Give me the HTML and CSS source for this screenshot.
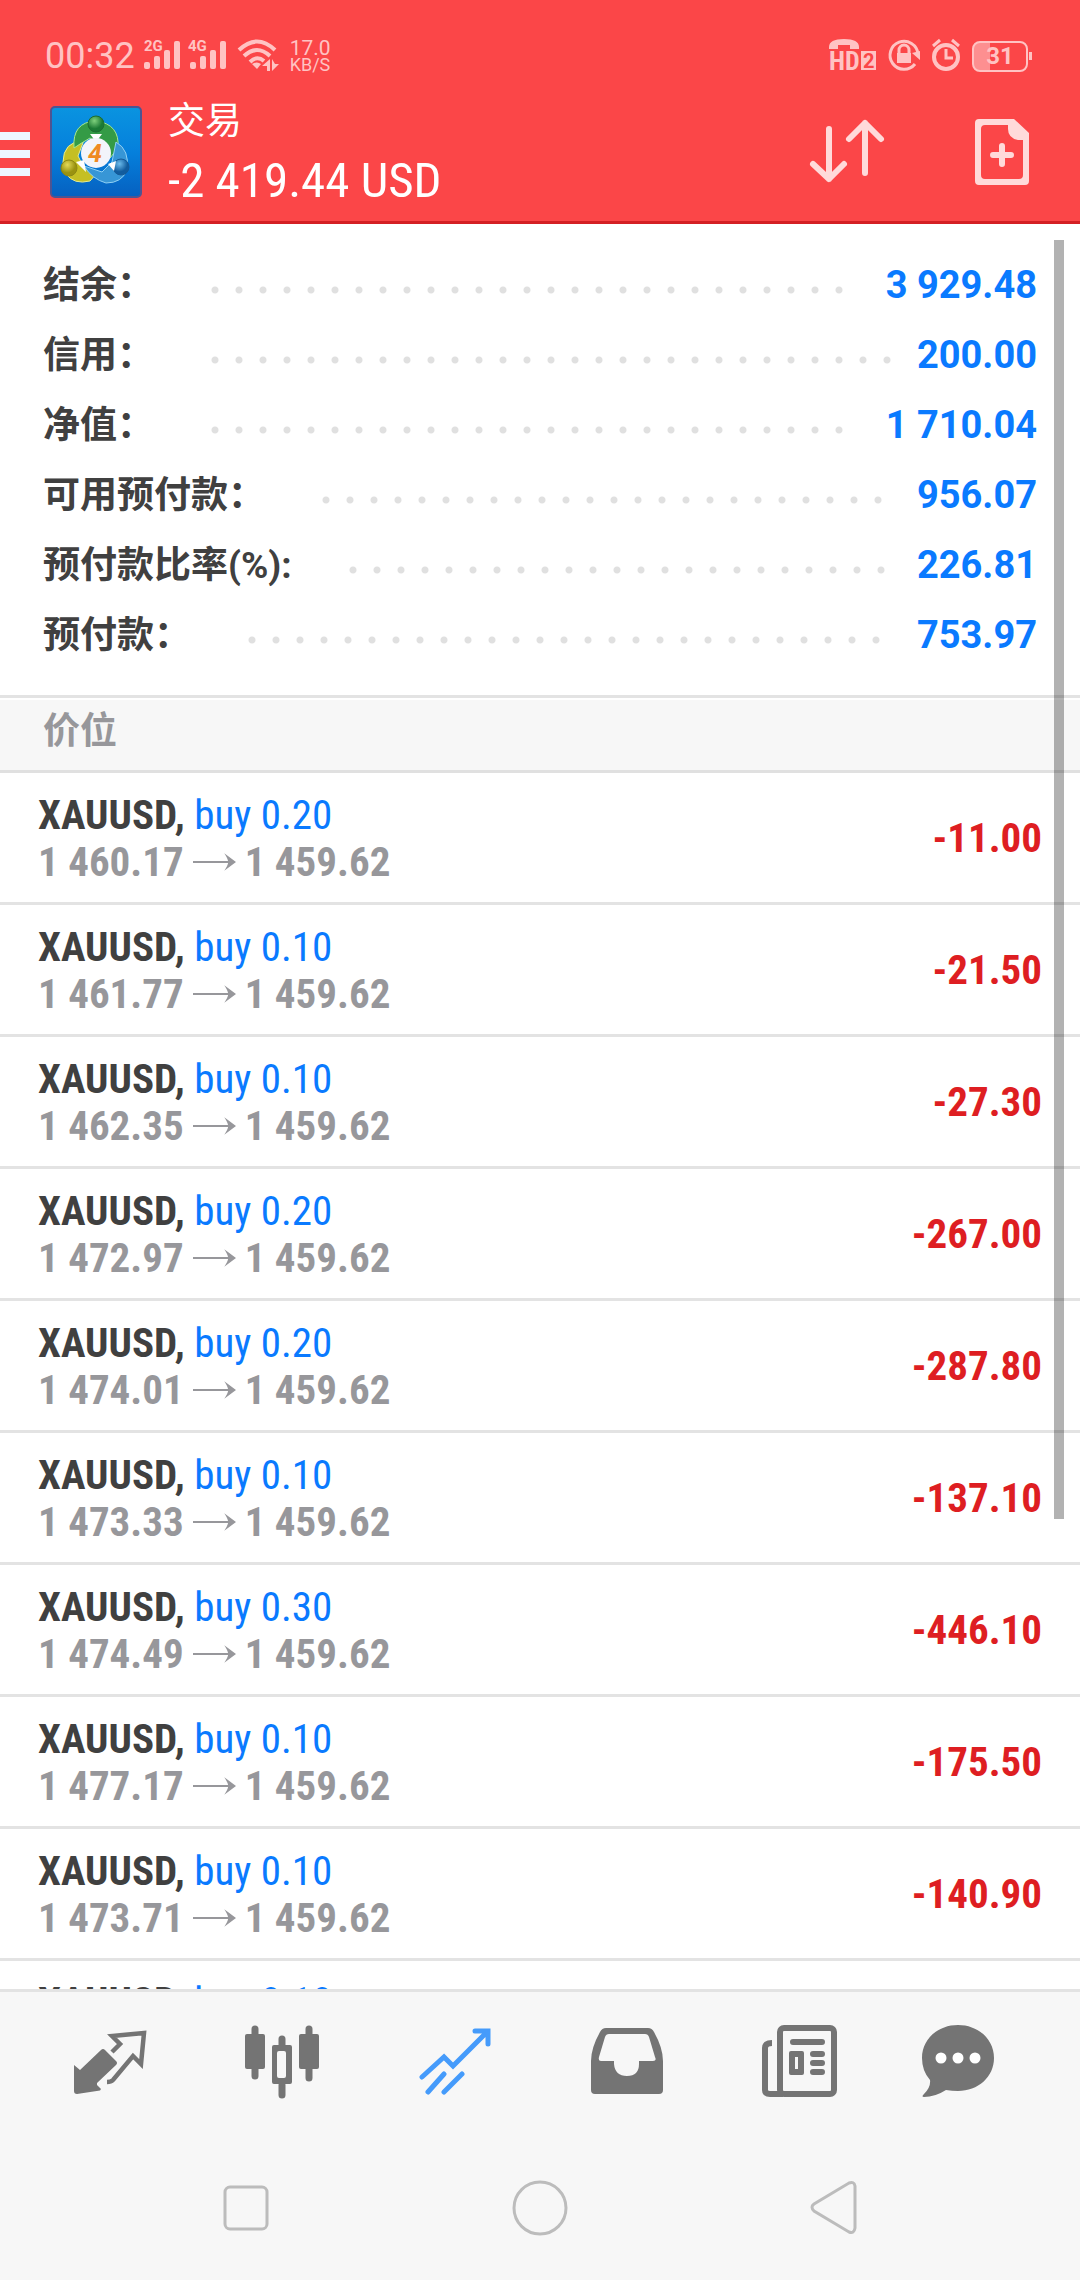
FILE: index.html
```html
<!DOCTYPE html>
<html lang="zh-CN">
<head>
<meta charset="utf-8">
<meta name="viewport" content="width=device-width, initial-scale=1">
<title>交易</title>
<link rel="stylesheet" href="styles.css">
</head>
<body>
<svg class="defs" width="0" height="0" aria-hidden="true">
  <symbol id="arrow" viewBox="0 0 44 20"><path d="M0 9h40v2H0z"/><path d="M32 1L44 10 32 19Q36 13 36 10T32 1z"/></symbol>
</svg>
<div class="app">
  <div class="top">
    <div class="status">
      <div class="status-group">
        <span class="clock">00:32</span>
        <svg width="84" height="36" viewBox="0 0 84 36" fill="currentColor" aria-hidden="true">
          <text class="net" x="0" y="13">2G</text>
          <rect x="0" y="24" width="6" height="7" rx="2"/><rect x="10" y="18" width="6" height="13" rx="2"/><rect x="20" y="12" width="6" height="19" rx="2"/><rect x="30" y="3" width="6" height="28" rx="2"/>
          <text class="net" x="44" y="13">4G</text>
          <rect x="46" y="24" width="6" height="7" rx="2"/><rect x="56" y="18" width="6" height="13" rx="2"/><rect x="66" y="12" width="6" height="19" rx="2"/><rect x="76" y="3" width="6" height="28" rx="2"/>
        </svg>
        <svg width="44" height="36" viewBox="0 0 44 36" fill="none" stroke="currentColor" stroke-width="4" aria-hidden="true">
          <path d="M2 12Q20-5 38 12M7 18Q20 6 33 18M13 24Q20 17 27 23"/>
          <path d="M15 26q5-3 9 0l-4 5z" fill="currentColor" stroke="none"/>
          <path d="M33 21v12h-3v-5h-5zM35 21v12l7-7h-4z" fill="currentColor" stroke="none"/>
        </svg>
        <span class="speed"><span class="speed-value">17.0</span><span class="speed-unit">KB/S</span></span>
      </div>
      <div class="status-group status-right">
        <svg width="47" height="36" viewBox="0 0 47 36" fill="currentColor" aria-hidden="true">
          <path d="M0 9Q0 1 15 1T30 9v2h-9V7H9v4H0z"/>
          <text class="hd" x="0" y="32">HD</text>
          <path d="M32 13h15v19H32z"/><text class="hd-index" x="34" y="30">2</text>
        </svg>
        <svg width="32" height="36" viewBox="0 0 32 36" fill="none" stroke="currentColor" stroke-width="3" aria-hidden="true">
          <path d="M27 26A14 14 0 1 1 30 16"/><path d="M11 16v-4a5 5 0 0 1 10 0v4"/>
          <path d="M9 15h14v10H9zM24 15l8-2v9z" fill="currentColor" stroke="none"/>
        </svg>
        <svg width="28" height="36" viewBox="0 0 28 36" fill="none" stroke="currentColor" stroke-width="4" aria-hidden="true">
          <circle cx="14" cy="19" r="12"/><path d="M14 11v9h7M1 8l7-6M27 8l-7-6" stroke-width="3"/>
        </svg>
        <span class="battery">31</span>
      </div>
    </div>
    <header class="header">
      <button class="menu" aria-label="菜单"><span class="bar"></span><span class="bar"></span><span class="bar"></span></button>
      <svg width="92" height="92" viewBox="0 0 92 92" role="img" aria-label="MetaTrader 4">
        <defs>
          <linearGradient id="bg" x2="0" y2="1"><stop offset="0" stop-color="#0a94e0"/><stop offset=".5" stop-color="#0580dc"/><stop offset="1" stop-color="#0660c0"/></linearGradient>
          <radialGradient id="g" cx=".4" cy=".3"><stop offset="0" stop-color="#7ed07c"/><stop offset="1" stop-color="#1c7a34"/></radialGradient>
          <radialGradient id="y" cx=".4" cy=".3"><stop offset="0" stop-color="#e4da58"/><stop offset="1" stop-color="#9a9210"/></radialGradient>
          <radialGradient id="b" cx=".4" cy=".3"><stop offset="0" stop-color="#6cbcec"/><stop offset="1" stop-color="#115c9e"/></radialGradient>
        </defs>
        <rect x="1" y="1" width="90" height="90" rx="4" fill="url(#bg)" stroke="#4d5492" stroke-width="2"/>
        <g stroke-width="1">
          <path d="M34 34Q13 36 13 56L16 68Q24 79 40 75L46 68 34 62 28 50z" fill="#c5bf24" stroke="#e5ec8f"/>
          <path d="M24 42Q22 16 46 15Q70 18 68 42L60 52 50 38 40 32 30 38z" fill="#349b46" stroke="#a7e88f"/>
          <path d="M66 36Q80 44 77 64Q72 77 56 77Q42 73 34 60L52 66 62 56z" fill="#3796d6" stroke="#8fd0f4"/>
          <circle cx="46" cy="18" r="8" fill="url(#g)" stroke="#1d6d30"/>
          <circle cx="19" cy="62" r="8" fill="url(#y)" stroke="#8d8713"/>
          <circle cx="71" cy="61" r="8" fill="url(#b)" stroke="#155a96"/>
        </g>
        <path d="M40 28h12l-6 8zM26 56l8-2 2 12zM58 58l8-3-2 10z" fill="#fff"/>
        <circle cx="46" cy="47" r="15" fill="#f2f4fa"/>
        <text class="logo-digit" x="45" y="56" text-anchor="middle">4</text>
      </svg>
      <div class="title"><h1 class="title-name">交易</h1><div class="title-sum">-2 419.44 USD</div></div>
      <div class="actions">
        <button class="icon-button" aria-label="排序">
          <svg width="76" height="66" viewBox="0 0 76 66" fill="none" stroke="currentColor" stroke-width="6" stroke-linecap="round" stroke-linejoin="round"><path d="M20 10v50M4 45l16 15 15-15M56 54V4M40 20L56 4l16 16"/></svg>
        </button>
        <button class="icon-button" aria-label="新订单">
          <svg width="54" height="66" viewBox="0 0 54 66" fill="currentColor"><path fill-rule="evenodd" d="M4 0H39L54 14V62q0 4-4 4H4q-4 0-4-4V4q0-4 4-4zM10 6q-4 0-4 4V56q0 4 4 4H44q4 0 4-4V21H43Q33 19 33 10V6z"/><path d="M27 27v18M18 36h18" stroke="currentColor" stroke-width="6" stroke-linecap="round"/></svg>
        </button>
      </div>
    </header>
  </div>

  <main class="content">
    <dl class="summary">
      <div class="summary-row"><dt>结余：</dt><dd class="leader"></dd><dd class="value">3 929.48</dd></div>
      <div class="summary-row"><dt>信用：</dt><dd class="leader"></dd><dd class="value">200.00</dd></div>
      <div class="summary-row"><dt>净值：</dt><dd class="leader"></dd><dd class="value">1 710.04</dd></div>
      <div class="summary-row"><dt>可用预付款：</dt><dd class="leader"></dd><dd class="value">956.07</dd></div>
      <div class="summary-row"><dt>预付款比率(%):</dt><dd class="leader"></dd><dd class="value">226.81</dd></div>
      <div class="summary-row"><dt>预付款：</dt><dd class="leader"></dd><dd class="value">753.97</dd></div>
    </dl>
    <h2 class="section">价位</h2>
    <ul class="trades">
      <li class="trade"><div><div class="deal"><b>XAUUSD,</b> <span class="side">buy 0.20</span></div><div class="prices">1 460.17<svg class="to"><use href="#arrow"/></svg>1 459.62</div></div><div class="profit">-11.00</div></li>
      <li class="trade"><div><div class="deal"><b>XAUUSD,</b> <span class="side">buy 0.10</span></div><div class="prices">1 461.77<svg class="to"><use href="#arrow"/></svg>1 459.62</div></div><div class="profit">-21.50</div></li>
      <li class="trade"><div><div class="deal"><b>XAUUSD,</b> <span class="side">buy 0.10</span></div><div class="prices">1 462.35<svg class="to"><use href="#arrow"/></svg>1 459.62</div></div><div class="profit">-27.30</div></li>
      <li class="trade"><div><div class="deal"><b>XAUUSD,</b> <span class="side">buy 0.20</span></div><div class="prices">1 472.97<svg class="to"><use href="#arrow"/></svg>1 459.62</div></div><div class="profit">-267.00</div></li>
      <li class="trade"><div><div class="deal"><b>XAUUSD,</b> <span class="side">buy 0.20</span></div><div class="prices">1 474.01<svg class="to"><use href="#arrow"/></svg>1 459.62</div></div><div class="profit">-287.80</div></li>
      <li class="trade"><div><div class="deal"><b>XAUUSD,</b> <span class="side">buy 0.10</span></div><div class="prices">1 473.33<svg class="to"><use href="#arrow"/></svg>1 459.62</div></div><div class="profit">-137.10</div></li>
      <li class="trade"><div><div class="deal"><b>XAUUSD,</b> <span class="side">buy 0.30</span></div><div class="prices">1 474.49<svg class="to"><use href="#arrow"/></svg>1 459.62</div></div><div class="profit">-446.10</div></li>
      <li class="trade"><div><div class="deal"><b>XAUUSD,</b> <span class="side">buy 0.10</span></div><div class="prices">1 477.17<svg class="to"><use href="#arrow"/></svg>1 459.62</div></div><div class="profit">-175.50</div></li>
      <li class="trade"><div><div class="deal"><b>XAUUSD,</b> <span class="side">buy 0.10</span></div><div class="prices">1 473.71<svg class="to"><use href="#arrow"/></svg>1 459.62</div></div><div class="profit">-140.90</div></li>
      <li class="trade"><div><div class="deal"><b>XAUUSD,</b> <span class="side">buy 0.10</span></div></div></li>
    </ul>
    <div class="scroll-thumb"></div>
  </main>

  <nav class="tabs">
    <a class="tab" href="#quotes" aria-label="行情"><svg width="108" height="80" viewBox="0 0 108 80"><path fill="currentColor" d="M18 44L24 49 45 29Q47 27 49 29L60 40Q62 42 60 44L41 62v2L45 68 44 69.500 21 73Q18 73 18 70z"/><path fill="none" stroke="currentColor" stroke-width="4.500" d="M56 31L64 23 56 15 88 12 85 43 77 35 57 59Q55 61 51 61"/></svg></a>
    <a class="tab" href="#chart" aria-label="图表"><svg width="108" height="80" viewBox="0 0 108 80" fill="none" stroke="currentColor" stroke-width="7" stroke-linecap="round"><path d="M27 8v47M81 8v49M54 18v8M54 64v10"/><g fill="currentColor" stroke="none"><rect x="17" y="13" width="20" height="35" rx="2"/><rect x="71" y="13" width="20" height="35" rx="2"/><path fill-rule="evenodd" d="M46 24H62q2 0 2 2V61q0 2-2 2H46q-2 0-2-2V26q0-2 2-2zM51 30q-2 0-2 2V55q0 2 2 2h5q2 0 2-2V32q0-2-2-2z"/></g></svg></a>
    <a class="tab active" href="#trade" aria-label="交易" aria-current="page"><svg width="108" height="80" viewBox="0 0 108 80" fill="none" stroke="currentColor" stroke-width="5" stroke-linecap="round"><path d="M21 56L43 36 52 45 86 11M74 10H87V23M27 71L43 53M43 71L61 53"/></svg></a>
    <a class="tab" href="#history" aria-label="历史"><svg width="108" height="80" viewBox="0 0 108 80" fill="currentColor"><path fill-rule="evenodd" d="M33 7H75Q79 7 81 11Q90 27 90 40V69q0 4-4 4H22q-4 0-4-4V40Q18 27 27 11Q29 7 33 7zM36 13Q33 13 32 16L26 36Q25 40 28 40H41V43Q42 55 54 55T66 43V40H80Q84 40 82 36L76 16Q75 13 72 13z"/></svg></a>
    <a class="tab" href="#news" aria-label="新闻"><svg width="108" height="80" viewBox="0 0 108 80" fill="none" stroke="currentColor" stroke-width="6"><rect x="35" y="7" width="54" height="66" rx="4"/><path d="M27 22Q20 22 20 27V69Q20 73 25 73H38"/><path stroke-linecap="round" d="M48 21H77M68 33h9M68 42h9M68 51h9"/><path fill="currentColor" stroke="none" fill-rule="evenodd" d="M46 30H57q2 0 2 2V52q0 2-2 2H46q-2 0-2-2V32q0-2 2-2zM50 36V48h3V36z"/></svg></a>
    <a class="tab" href="#chat" aria-label="消息"><svg width="108" height="80" viewBox="-3 0 108 80"><path fill="currentColor" d="M37 4C57 4 73 18 73 37S57 70 37 70Q31 70 25 69Q14 76 3 76Q0 76 3 73Q10 66 9 59Q1 50 1 37C1 18 17 4 37 4z"/><g fill="#fff"><circle cx="20" cy="37" r="5.500"/><circle cx="37" cy="37" r="5.500"/><circle cx="54" cy="37" r="5.500"/></g></svg></a>
  </nav>
  <div class="system-nav">
    <button class="sys" aria-label="最近任务"><svg width="56" height="56" viewBox="0 0 56 56"><rect x="7" y="7" width="42" height="42" rx="5"/></svg></button>
    <button class="sys" aria-label="主屏幕"><svg width="56" height="56" viewBox="0 0 56 56"><circle cx="28" cy="28" r="26"/></svg></button>
    <button class="sys" aria-label="返回"><svg width="56" height="56" viewBox="0 0 56 56"><path d="M43 3Q48 1 49 6V48Q48 54 43 52L8 31Q4 27 8 24z"/></svg></button>
  </div>
</div>
</body>
</html>
```
FILE: styles.css
```css
* { box-sizing: border-box; }

body {
  margin: 0;
  background: #fff;
  color: #404040;
  font-family: Roboto, "Noto Sans CJK SC", sans-serif;
}

h1, h2, dl, dd, ul { margin: 0; padding: 0; }
ul { list-style: none; }
svg { display: block; flex: none; overflow: visible; }
button { padding: 0; border: 0; background: none; color: inherit; font: inherit; }
.defs { position: absolute; }

.app {
  display: flex;
  flex-direction: column;
  height: 100vh;
}

/* Status bar and header */
.top {
  flex: none;
  background: #fb4648;
  border-bottom: 3px solid #d42024;
  color: #fff;
}

.status {
  display: flex;
  justify-content: space-between;
  padding: 32px 52px 0 45px;
  height: 80px;
  color: #ffc3c3;
}

.status-group { display: flex; align-items: center; gap: 9px; }
.status-right { gap: 12px; }
.clock { font-size: 36px; line-height: 48px; }
.net { font-size: 15px; font-weight: 700; }
.hd { font: 700 26px "Roboto Condensed", "Liberation Sans Narrow", sans-serif; }
.hd-index { font-size: 20px; font-weight: 700; fill: #fb4648; }
.speed { display: flex; flex-direction: column; }
.speed-value { font-size: 21px; line-height: 18px; }
.speed-unit { font-size: 18px; line-height: 16px; }

.battery {
  position: relative;
  width: 56px;
  height: 31px;
  border: 2px solid #ffc3c3;
  border-radius: 8px;
  background: linear-gradient(90deg, #fd8f90 31%, transparent 31%);
  font-size: 24px;
  font-weight: 700;
  line-height: 27px;
  text-align: center;
}

.battery::after {
  content: "";
  position: absolute;
  top: 9px;
  right: -6px;
  width: 3px;
  height: 8px;
  background: #ffc3c3;
}

.header {
  display: flex;
  align-items: center;
  height: 141px;
  padding-top: 2px;
}

.menu { display: grid; gap: 10px; width: 30px; margin-right: 20px; padding-top: 4px; }
.bar { height: 8px; background: #eef6ff; }
.logo-digit { font: italic 700 25px Roboto, sans-serif; fill: #ef8a23; }
.title { margin-left: 26px; white-space: nowrap; }
.title-name { font-size: 37px; font-weight: 400; line-height: 58px; }

.title-sum {
  font-family: "Roboto Condensed", "Liberation Sans Narrow", sans-serif;
  font-size: 49px;
  line-height: 60px;
}

.actions {
  display: flex;
  align-items: center;
  gap: 90px;
  margin-left: auto;
  padding-right: 51px;
  color: #ffdada;
}

/* Account summary */
.content {
  position: relative;
  flex: 1;
  min-height: 0;
  overflow: hidden;
}

.summary { padding: 26px 43px 25px; border-bottom: 3px solid #e3e3e3; }
.summary-row { display: flex; align-items: baseline; height: 70px; line-height: 70px; white-space: nowrap; }
.summary dt { font-size: 37px; font-weight: 700; }
.value { color: #0a7aff; font-size: 38px; font-weight: 700; }
.leader { flex: 1; align-self: center; margin: 0 17px 0 49px; }

.leader::before {
  content: "";
  display: block;
  width: 100%;
  width: round(down, 100%, 24px);
  height: 24px;
  background: radial-gradient(circle at 12px 17px, #e0e0e0 3px, transparent 4px) 0 0 / 24px 24px;
}

.section {
  height: 75px;
  padding: 3px 43px 9px;
  border-top: 2px solid #fff;
  border-bottom: 3px solid #e0e0e0;
  background: #f7f7f7;
  color: #97979b;
  font-size: 37px;
  font-weight: 700;
  line-height: 58px;
}

/* Open positions */
.trades { font-family: "Roboto Condensed", "Liberation Sans Narrow", sans-serif; font-size: 41px; }

.trade {
  display: flex;
  align-items: center;
  justify-content: space-between;
  height: 132px;
  padding: 2px 38px 0;
  border-bottom: 3px solid #e3e3e3;
  line-height: 47px;
  white-space: nowrap;
}

.trade:last-child { align-items: flex-start; padding-top: 18px; }
.side { color: #0a7aff; }
.prices { display: flex; align-items: center; gap: 9px; color: #97979b; font-weight: 700; }
.to { width: 43px; height: 20px; fill: currentColor; }
.profit { color: #de1e22; font-weight: 700; }

.scroll-thumb {
  position: absolute;
  top: 16px;
  right: 16px;
  width: 10px;
  height: 1279px;
  background: rgba(0, 0, 0, 0.3);
}

/* Bottom navigation */
.tabs {
  flex: none;
  display: grid;
  grid-template-columns: repeat(6, 1fr);
  padding: 29px 22px 35px 24px;
  border-top: 3px solid #e3e3e3;
  background: #f7f7f7;
}

.tab { display: flex; justify-content: center; color: #747474; }
.tab.active { color: #459bfb; }

.system-nav {
  flex: none;
  display: grid;
  grid-template-columns: repeat(3, 1fr);
  height: 144px;
  padding: 0 99px;
  background: #f7f7f7;
}

.sys { display: flex; align-items: center; justify-content: center; }
.sys svg { fill: none; stroke: #bcbcbc; stroke-width: 3px; }
```
